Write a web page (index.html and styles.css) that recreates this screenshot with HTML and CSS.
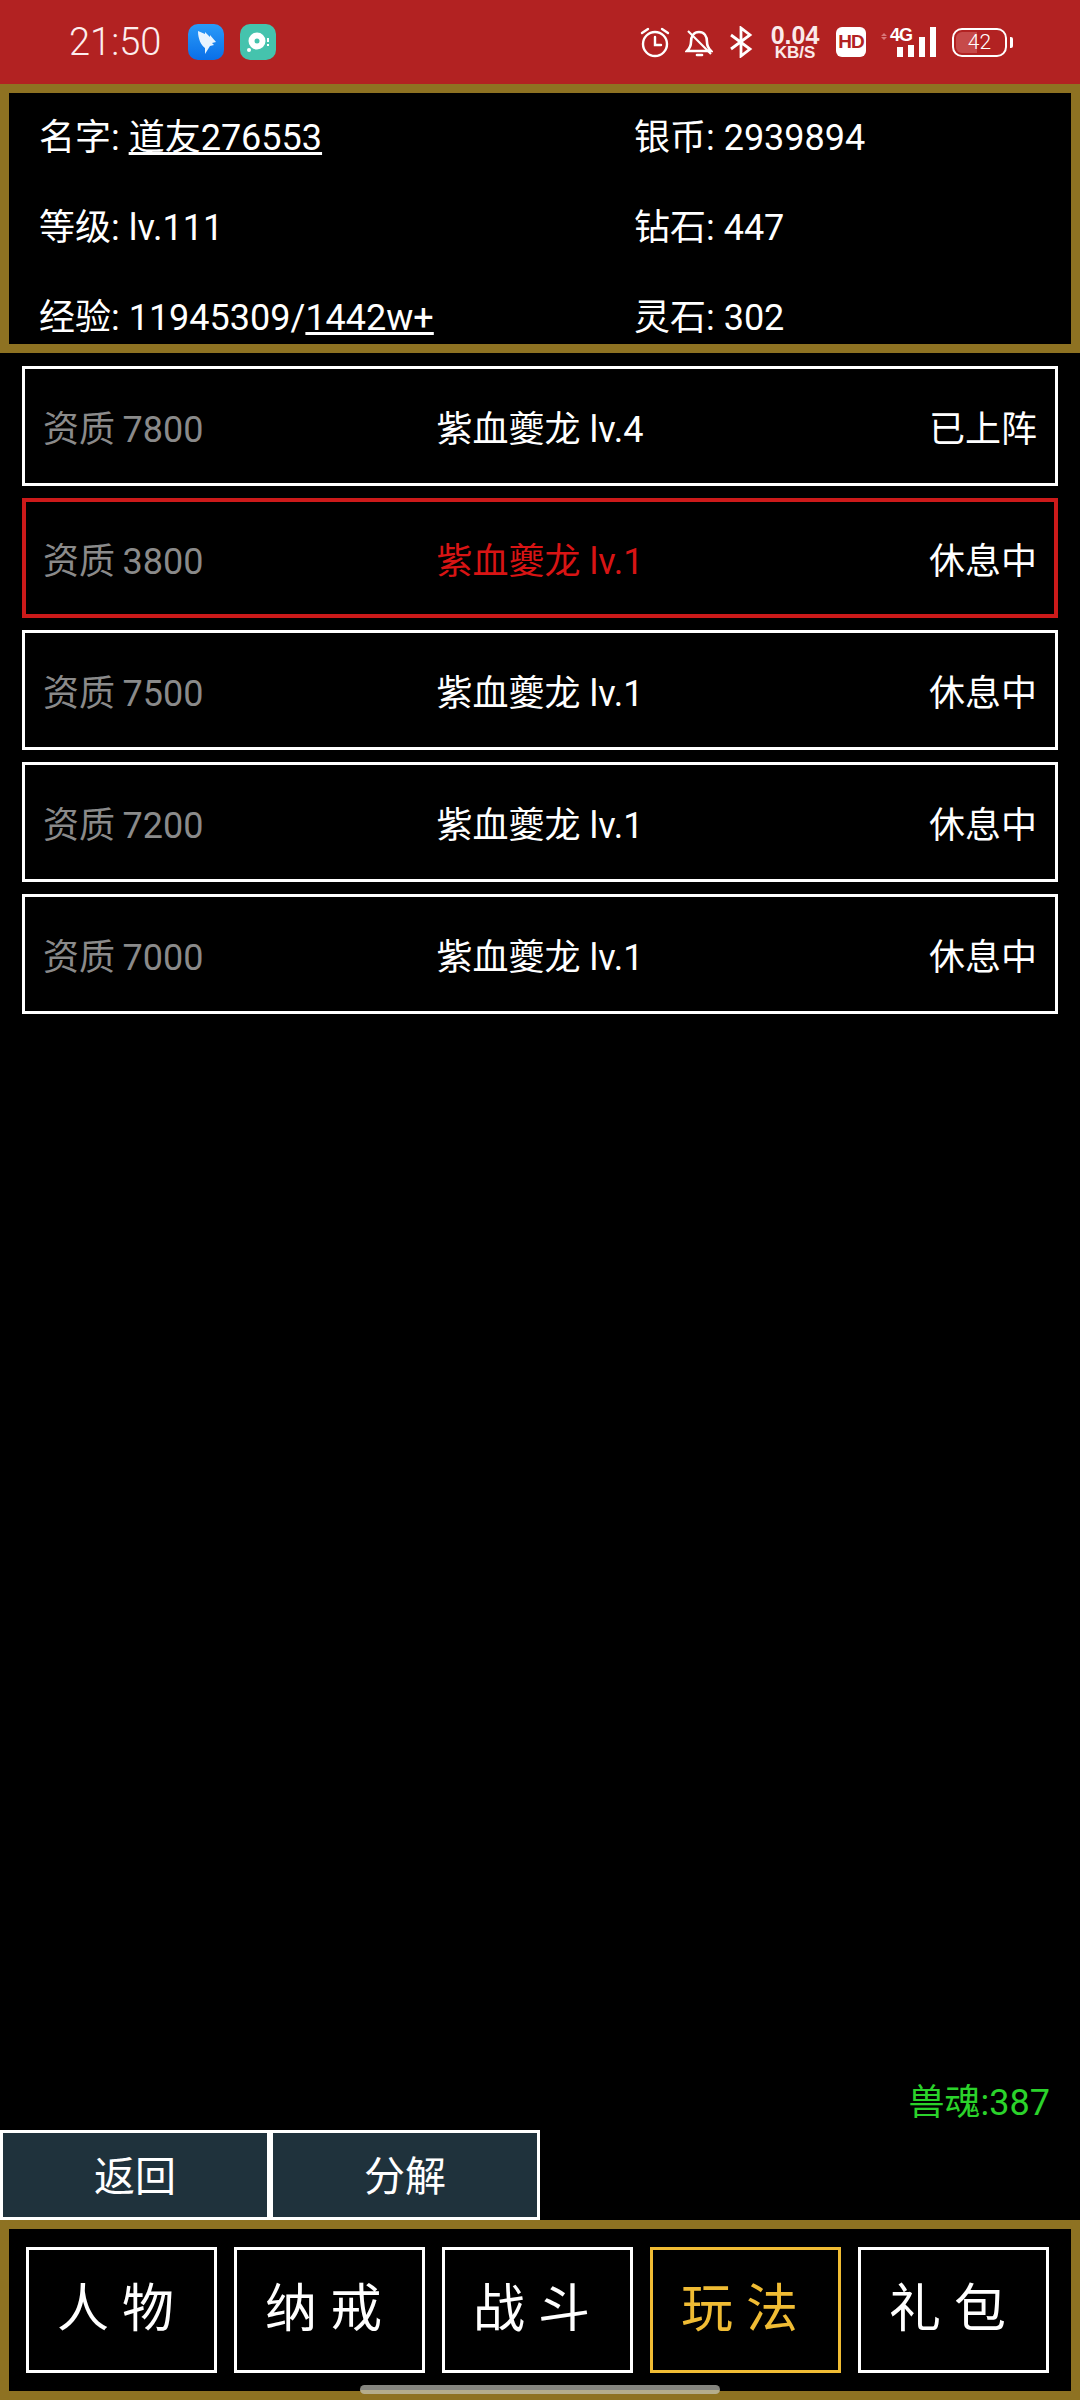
FILE: index.html
```html
<!DOCTYPE html>
<html>
<head>
  <meta charset="utf-8">
  <title>紫血夔龙</title>
  <link rel="stylesheet" href="styles.css">
</head>
<body>
  <div class="status">
    <span class="time">21:50</span>
    <svg class="app" viewBox="0 0 36 36">
      <defs><linearGradient id="blue" x1="0" y1="0" x2="0" y2="1"><stop offset="0" stop-color="#2a9bf8"/><stop offset="1" stop-color="#0a6fe8"/></linearGradient></defs>
      <rect width="36" height="36" rx="10" fill="url(#blue)"/>
      <path d="M10 7 L17 10 L17 8 L22 13 L22 11 L28 18 L24 19 L26 21 L22 22 L17 30 L17 24 C13 21 10 15 10 7Z" fill="#e8f4ff"/>
    </svg>
    <svg class="app" viewBox="0 0 36 36">
      <rect width="36" height="36" rx="10" fill="#45c3ad"/>
      <circle cx="17" cy="17" r="8.5" fill="#fff"/>
      <circle cx="17" cy="17" r="2.5" fill="#45c3ad"/>
      <circle cx="9" cy="26" r="2" fill="#fff"/>
      <rect x="27" y="14" width="2" height="4" fill="#fff"/>
      <rect x="27" y="20" width="2" height="2" fill="#fff"/>
    </svg>
    <div class="status-right">
      <svg width="32" height="32" viewBox="0 0 32 32" fill="none" stroke="#fff" stroke-width="2.4">
        <circle cx="16" cy="18" r="12"/>
        <path d="M16 11v8h6M3 7l6-4M29 7l-6-4" stroke-linecap="round"/>
      </svg>
      <svg width="28" height="32" viewBox="0 0 28 32" fill="none" stroke="#fff" stroke-width="2.6">
        <path d="M2 25c2-2 4-4 4-9 0-6 3-10 8-10s8 4 8 10c0 5 2 7 4 9z"/>
        <path d="M3 5l23 23" stroke-width="2.2"/>
        <path d="M12 29h5" stroke-linecap="round"/>
      </svg>
      <svg width="28" height="32" viewBox="0 0 28 32" fill="none" stroke="#fff" stroke-width="2.8">
        <path d="M4 9l19 14-9 7V2l9 7L4 23"/>
      </svg>
      <div class="speed"><b>0.04</b><span>KB/S</span></div>
      <span class="hd">HD</span>
      <svg width="58" height="32" viewBox="0 0 58 32">
        <path d="M5 8l-3 3h6zM5 15l-3-3h6z" fill="#d8777a" transform="translate(0 -1)"/>
        <text x="11" y="15" class="net">4G</text>
        <rect x="18" y="21" width="6" height="10" fill="#fff"/>
        <rect x="29" y="19" width="6" height="12" fill="#fff"/>
        <rect x="40" y="11" width="6" height="20" fill="#fff"/>
        <rect x="51" y="1" width="6" height="30" fill="#fff"/>
      </svg>
      <div class="battery"><span class="level"></span><span class="pct">42</span></div>
    </div>
  </div>

  <div class="info">
    <div>名字: <u>道友276553</u></div>
    <div>银币: 2939894</div>
    <div>等级: lv.111</div>
    <div>钻石: 447</div>
    <div>经验: 11945309/<u>1442w+</u></div>
    <div>灵石: 302</div>
  </div>

  <div class="list">
    <div class="row"><span class="grade">资质 7800</span><span>紫血夔龙 lv.4</span><span class="state">已上阵</span></div>
    <div class="row selected"><span class="grade">资质 3800</span><span class="name">紫血夔龙 lv.1</span><span class="state">休息中</span></div>
    <div class="row"><span class="grade">资质 7500</span><span>紫血夔龙 lv.1</span><span class="state">休息中</span></div>
    <div class="row"><span class="grade">资质 7200</span><span>紫血夔龙 lv.1</span><span class="state">休息中</span></div>
    <div class="row"><span class="grade">资质 7000</span><span>紫血夔龙 lv.1</span><span class="state">休息中</span></div>
  </div>

  <div class="soul">兽魂:387</div>

  <div class="actions">
    <div class="btn">返回</div>
    <div class="btn">分解</div>
  </div>

  <div class="nav">
    <div class="tab">人 物</div>
    <div class="tab">纳 戒</div>
    <div class="tab">战 斗</div>
    <div class="tab active">玩 法</div>
    <div class="tab">礼 包</div>
    <div class="home"></div>
  </div>
</body>
</html>
```

FILE: styles.css
```css
html, body {
  margin: 0;
  height: 100%;
}
body {
  width: 1080px;
  height: 2400px;
  display: flex;
  flex-direction: column;
  background: #000;
  color: #fff;
  font-family: Roboto, "Noto Sans CJK SC", sans-serif;
  font-size: 36px;
  overflow: hidden;
}

.status {
  height: 84px;
  flex: none;
  box-sizing: border-box;
  padding: 0 67px 0 69px;
  display: flex;
  align-items: center;
  background: #b22222;
}
.time {
  font-size: 38px;
  font-weight: 300;
  margin-right: 27px;
  color: #fdeeee;
}
.app {
  width: 36px;
  height: 36px;
  margin-right: 16px;
}
.status-right {
  margin-left: auto;
  display: flex;
  align-items: center;
  gap: 14px;
}
.speed {
  width: 52px;
  display: flex;
  flex-direction: column;
  align-items: center;
  font-family: "Liberation Sans", sans-serif;
  color: #fbeaea;
}
.speed b {
  font-size: 25px;
  line-height: 20px;
}
.speed span {
  font-size: 17px;
  line-height: 15px;
  font-weight: bold;
}
.hd {
  width: 30px;
  height: 30px;
  margin-left: 1px;
  margin-right: -1px;
  background: #fff;
  border-radius: 6px;
  color: #b22222;
  font: bold 19px/30px "Liberation Sans", sans-serif;
  text-align: center;
  letter-spacing: -1px;
}
.net {
  fill: #fff;
  font: bold 18px "Liberation Sans", sans-serif;
  letter-spacing: -1px;
}
.battery {
  position: relative;
  width: 55px;
  height: 29px;
  margin-left: 1px;
  margin-right: 6px;
  box-sizing: border-box;
  border: 2.5px solid #fff;
  border-radius: 10px;
  display: flex;
  align-items: center;
  justify-content: center;
}
.battery::after {
  content: "";
  position: absolute;
  right: -8px;
  top: 7px;
  width: 3px;
  height: 11px;
  background: #fff;
  border-radius: 0 2px 2px 0;
}
.level {
  position: absolute;
  left: 2px;
  top: 2px;
  bottom: 2px;
  width: 21px;
  background: #c64a4a;
  border-radius: 6px 0 0 6px;
}
.pct {
  position: relative;
  font-size: 21px;
  font-weight: 300;
}

.info {
  height: 269px;
  flex: none;
  box-sizing: border-box;
  border: 9px solid #8e7222;
  padding: 2px 0 0 30px;
  display: grid;
  grid-template-columns: 595px 1fr;
  grid-auto-rows: 90px;
  line-height: 86px;
  overflow: hidden;
}

.list {
  flex: none;
  margin-top: 13px;
  padding: 0 22px;
  display: flex;
  flex-direction: column;
  gap: 12px;
}
.row {
  height: 120px;
  box-sizing: border-box;
  border: 3px solid #fff;
  padding: 0 18px;
  display: grid;
  grid-template-columns: 1fr auto 1fr;
  align-items: center;
}
.grade {
  color: #8a8a8a;
  word-spacing: -1.5px;
}
.state {
  text-align: right;
}
.selected {
  border: 4px solid #cc1a1a;
  padding: 0 17px;
}
.selected .name {
  color: #d81414;
}

.soul {
  margin-top: auto;
  padding-right: 30px;
  text-align: right;
  color: #2bd32b;
  line-height: 54px;
}

.actions {
  flex: none;
  display: flex;
}
.btn {
  width: 270px;
  height: 90px;
  box-sizing: border-box;
  border: 3px solid #fff;
  background: #1f323c;
  font-size: 41px;
  line-height: 88px;
  text-align: center;
}

.nav {
  position: relative;
  flex: none;
  height: 180px;
  box-sizing: border-box;
  border: 9px solid #8e7222;
  padding: 18px 17px 0;
  display: flex;
  gap: 17px;
}
.tab {
  width: 191px;
  height: 126px;
  box-sizing: border-box;
  border: 3px solid #fff;
  padding-right: 12px;
  font-size: 52px;
  line-height: 120px;
  text-align: center;
}
.tab.active {
  border-color: #f0bc34;
  color: #f0bc34;
}
.home {
  position: absolute;
  left: 351px;
  top: 156px;
  width: 360px;
  height: 9px;
  border-radius: 5px;
  background: linear-gradient(#85857f 60%, #b5ad8c 60%);
}
```
